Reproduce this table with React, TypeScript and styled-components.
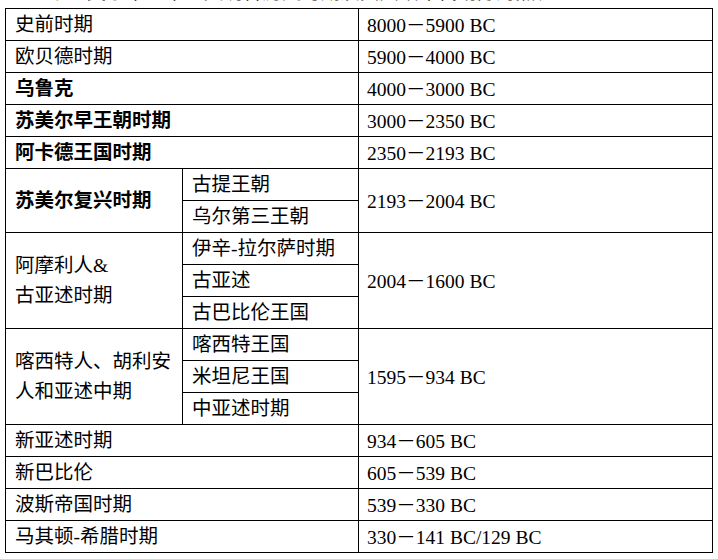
import styled, { createGlobalStyle } from "styled-components";

const GlobalStyle = createGlobalStyle`
  html, body {
    margin: 0;
    padding: 0;
    background: #fff;
  }
  body {
    font-family: "Liberation Serif", "Noto Sans CJK SC", serif;
    color: #000;
  }
`;

const Page = styled.div`
  width: 718px;
  height: 559px;
  overflow: hidden;
  background: #fff;
`;

const Caption = styled.div`
  height: 3px;
  overflow: hidden;
  display: flex;
  align-items: flex-end;
  padding-left: 52px;
  font-family: "Noto Sans CJK SC", sans-serif;
  font-size: 19.5px;
  line-height: 20px;
  white-space: nowrap;

  & > span {
    margin-bottom: 2px;
  }
`;

const Table = styled.table`
  margin: 5px 0 0 5px;
  width: 707px;
  border-collapse: collapse;
  table-layout: fixed;
  font-size: 19.5px;
`;

const Row = styled.tr`
  height: 32px;
`;

const Cell = styled.td<{ $bold?: boolean }>`
  border: 1px solid #000;
  padding: 0 0 0 9px;
  vertical-align: middle;
  white-space: nowrap;
  line-height: 20px;
  font-family: "Liberation Serif", "Noto Sans CJK SC", serif;
  font-weight: ${({ $bold }) => ($bold ? 700 : 400)};
`;

const Years = styled(Cell)`
  padding-left: 8px;
`;

const Line = styled.div`
  line-height: 30px;
  height: 30px;
`;

const Dash = styled.span`
  font-family: "Noto Sans CJK SC", sans-serif;
`;

type Period = { name: string; bold?: boolean; subs?: string[]; lines?: string[]; years: string };

const periods: Period[] = [
  { name: "史前时期", years: "8000－5900 BC" },
  { name: "欧贝德时期", years: "5900－4000 BC" },
  { name: "乌鲁克", bold: true, years: "4000－3000 BC" },
  { name: "苏美尔早王朝时期", bold: true, years: "3000－2350 BC" },
  { name: "阿卡德王国时期", bold: true, years: "2350－2193 BC" },
  {
    name: "苏美尔复兴时期",
    bold: true,
    subs: ["古提王朝", "乌尔第三王朝"],
    years: "2193－2004 BC",
  },
  {
    name: "",
    lines: ["阿摩利人&", "古亚述时期"],
    subs: ["伊辛-拉尔萨时期", "古亚述", "古巴比伦王国"],
    years: "2004－1600 BC",
  },
  {
    name: "",
    lines: ["喀西特人、胡利安", "人和亚述中期"],
    subs: ["喀西特王国", "米坦尼王国", "中亚述时期"],
    years: "1595－934 BC",
  },
  { name: "新亚述时期", years: "934－605 BC" },
  { name: "新巴比伦", years: "605－539 BC" },
  { name: "波斯帝国时期", years: "539－330 BC" },
  { name: "马其顿-希腊时期", years: "330－141 BC/129 BC" },
];

function YearText({ text }: { text: string }) {
  const [a, b] = text.split("－");
  return (
    <>
      {a}
      <Dash>－</Dash>
      {b}
    </>
  );
}

function NameText({ p }: { p: Period }) {
  if (!p.lines) return <>{p.name}</>;
  return (
    <>
      {p.lines.map((l, i) => (
        <Line key={i}>{l}</Line>
      ))}
    </>
  );
}

export default function App() {
  return (
    <Page>
      <GlobalStyle />
      <Caption>
        <span>表1 美索不达米亚文明各历史时期及其大致年代划分对照表</span>
      </Caption>
      <Table>
        <colgroup>
          <col style={{ width: 177 }} />
          <col style={{ width: 176 }} />
          <col style={{ width: 354 }} />
        </colgroup>
        <tbody>
          {periods.map((p, i) => {
            if (!p.subs) {
              return (
                <Row key={i}>
                  <Cell colSpan={2} $bold={p.bold}>
                    {p.name}
                  </Cell>
                  <Years>
                    <YearText text={p.years} />
                  </Years>
                </Row>
              );
            }
            return p.subs.map((s, j) => (
              <Row key={`${i}-${j}`}>
                {j === 0 && (
                  <Cell rowSpan={p.subs!.length} $bold={p.bold}>
                    <NameText p={p} />
                  </Cell>
                )}
                <Cell>{s}</Cell>
                {j === 0 && (
                  <Years rowSpan={p.subs!.length}>
                    <YearText text={p.years} />
                  </Years>
                )}
              </Row>
            ));
          })}
        </tbody>
      </Table>
    </Page>
  );
}
